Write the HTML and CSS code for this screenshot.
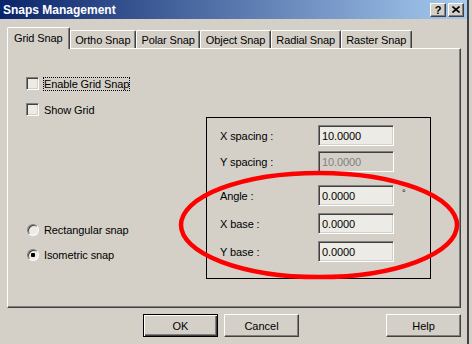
FILE: index.html
```html
<!doctype html>
<html lang="en">
  <head>
    <meta charset="UTF-8" />
    <link rel="stylesheet" href="styles.css">
    <title>Snaps Management</title>
  </head>
  <body>
    <div class="window">
      <!-- Caption bar -->
      <div class="titlebar">
        <span class="title">Snaps Management</span>
        <div class="caption-buttons">
          <span class="cap-btn">?</span>
          <span class="cap-btn">
            <svg width="8" height="7" viewBox="0 0 8 7">
              <path d="M0.5 0.5 L7.5 6.5 M7.5 0.5 L0.5 6.5" stroke="#000" stroke-width="1.6" fill="none" />
            </svg>
          </span>
        </div>
      </div>

      <!-- Tab strip -->
      <div class="tabs">
        <div class="tab active">Grid Snap</div>
        <div class="tab">Ortho Snap</div>
        <div class="tab">Polar Snap</div>
        <div class="tab">Object Snap</div>
        <div class="tab">Radial Snap</div>
        <div class="tab">Raster Snap</div>
      </div>

      <div class="panel">
        <!-- Left column: toggles and snap type -->
        <div class="options">
          <label class="check"><span class="box"></span><span class="caption focus">Enable Grid Snap</span></label>
          <label class="check"><span class="box"></span><span class="caption">Show Grid</span></label>
          <div class="radios">
            <label class="radio"><span class="dot"></span>Rectangular snap</label>
            <label class="radio"><span class="dot checked"></span>Isometric snap</label>
          </div>
        </div>

        <!-- Right column: grid values -->
        <div class="frame">
          <div class="group">
            <div class="field-row"><span class="label">X spacing :</span><span class="edit">10.0000</span></div>
            <div class="field-row"><span class="label">Y spacing :</span><span class="edit disabled">10.0000</span></div>
          </div>
          <div class="group origin">
            <div class="field-row"><span class="label">Angle :</span><span class="edit">0.0000</span><span class="unit">°</span></div>
            <div class="field-row"><span class="label">X base :</span><span class="edit">0.0000</span></div>
            <div class="field-row"><span class="label">Y base :</span><span class="edit">0.0000</span></div>
          </div>
        </div>
      </div>

      <div class="buttons">
        <button class="btn default">OK</button>
        <button class="btn">Cancel</button>
        <button class="btn help">Help</button>
      </div>

      <!-- Red marker drawn over the dialog -->
      <svg class="highlight" width="472" height="344" viewBox="0 0 472 344">
        <ellipse cx="319" cy="225" rx="138" ry="52" fill="none" stroke="#ff0000" stroke-width="4.5" />
      </svg>
    </div>
  </body>
</html>
```

FILE: styles.css
```css
html,
body {
  margin: 0;
  background: #d4d0c8;
}

body {
  font-family: "Liberation Sans", Arial, sans-serif;
  font-size: 11px;
  letter-spacing: -0.1px;
  color: #000;
}

.window {
  position: relative;
  width: 467px;
  height: 344px;
  border-right: 2px solid #404040;
}

/* Caption bar */
.titlebar {
  display: flex;
  align-items: center;
  justify-content: space-between;
  height: 19px;
  padding: 0 3px;
  background: linear-gradient(to right, #0a246a, #a6caf0);
  color: #fff;
}

.title {
  font-weight: bold;
  font-size: 12px;
  letter-spacing: 0;
}

.caption-buttons {
  display: flex;
  gap: 2px;
}

.cap-btn {
  display: flex;
  align-items: center;
  justify-content: center;
  width: 16px;
  height: 14px;
  box-sizing: border-box;
  background: #d4d0c8;
  border: 1px solid;
  border-color: #fff #404040 #404040 #fff;
  box-shadow: inset -1px -1px #808080;
  color: #000;
  font-weight: bold;
  font-size: 11px;
  letter-spacing: 0;
}

/* Tabs */
.tabs {
  position: relative;
  z-index: 1;
  display: flex;
  align-items: flex-end;
  margin: 8px 0 0 7px;
}

.tab {
  display: flex;
  align-items: center;
  height: 18px;
  box-sizing: border-box;
  padding: 0 4.5px;
  border-top: 1px solid #fff;
  border-left: 1px solid #fff;
  border-right: 1px solid #404040;
  border-radius: 2px 2px 0 0;
  box-shadow: inset -1px 0 #808080;
  background: #d4d0c8;
}

.tab.active {
  height: 22px;
  margin-bottom: -1px;
  padding: 0 6px 2px;
}

/* Page body */
.panel {
  display: flex;
  width: 454px;
  height: 260px;
  margin-left: 7px;
  box-sizing: border-box;
  border: 1px solid;
  border-color: #fff #404040 #404040 #fff;
  box-shadow: inset -1px -1px #808080;
}

.options {
  display: flex;
  flex-direction: column;
  width: 198px;
  box-sizing: border-box;
  padding: 28px 0 0 18px;
}

.check,
.radio {
  display: flex;
  align-items: center;
  height: 13px;
  gap: 4px;
}

.check + .check {
  margin-top: 13px;
}

.box {
  width: 13px;
  height: 13px;
  box-sizing: border-box;
  border: 1px solid;
  border-color: #808080 #fff #fff #808080;
  box-shadow: inset 1px 1px #404040, inset -1px -1px #d4d0c8;
  background: #ecebe6;
}

.caption {
  border: 1px dotted transparent;
  line-height: 12px;
}

.caption.focus {
  border-color: #000;
}

.radios {
  display: flex;
  flex-direction: column;
  gap: 12px;
  margin-top: 107px;
}

.radio {
  gap: 5px;
}

.dot {
  width: 12px;
  height: 12px;
  margin-left: 1px;
  box-sizing: border-box;
  border: 1px solid;
  border-color: #808080 #fff #fff #808080;
  border-radius: 50%;
  box-shadow: inset 1px 1px #404040;
  background: #ecebe6;
}

.dot.checked {
  background: radial-gradient(circle, #000 0 2px, #ecebe6 2.5px);
}

.frame {
  display: flex;
  flex-direction: column;
  gap: 13px;
  width: 225px;
  height: 162px;
  margin-top: 68px;
  box-sizing: border-box;
  padding: 7px 0 0 13px;
  border: 1px solid #000;
}

.group {
  display: flex;
  flex-direction: column;
  gap: 5px;
}

.group.origin {
  gap: 7px;
}

.field-row {
  display: flex;
  align-items: center;
}

.label {
  width: 98px;
}

.edit {
  display: flex;
  align-items: center;
  width: 76px;
  height: 21px;
  box-sizing: border-box;
  padding: 0 3px;
  border: 1px solid;
  border-color: #808080 #fff #fff #808080;
  box-shadow: inset 1px 1px #404040, inset -1px -1px #d4d0c8;
  background: #ecebe6;
}

.edit.disabled {
  background: #d4d0c8;
  color: #808080;
}

.unit {
  align-self: flex-start;
  margin: 3px 0 0 8px;
  font-size: 9px;
}

/* Dialog buttons */
.buttons {
  display: flex;
  gap: 6px;
  padding: 6px 6px 0 143px;
}

.btn {
  width: 75px;
  height: 23px;
  box-sizing: border-box;
  padding: 0;
  font: inherit;
  color: #000;
  background: #d4d0c8;
  border: 1px solid;
  border-color: #fff #404040 #404040 #fff;
  box-shadow: inset -1px -1px #808080;
}

.btn.default {
  border-color: #000;
  box-shadow: inset 1px 1px #fff, inset -1px -1px #404040, inset -2px -2px #808080;
}

.btn.help {
  margin-left: auto;
}

.highlight {
  position: absolute;
  left: 0;
  top: 0;
  pointer-events: none;
}
```
